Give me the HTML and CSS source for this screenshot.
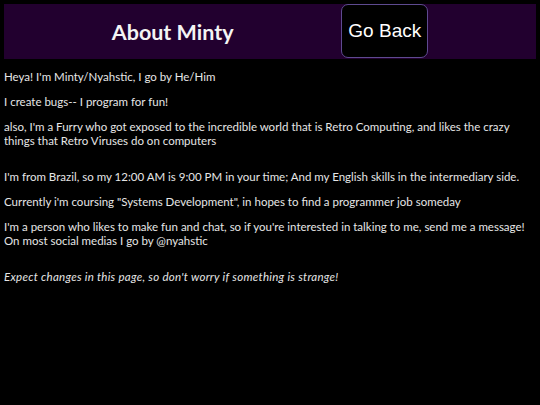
FILE: index.html
```html
<!DOCTYPE html>
<html lang="en">
<head>
<meta charset="utf-8">
<title>About Minty</title>
<link rel="stylesheet" href="styles.css">
</head>
<body>
<header class="topbar">
  <h1 class="title">About Minty</h1>
  <a class="back-btn" href="#">Go Back</a>
</header>
<main class="content">
  <p>Heya! I'm Minty/Nyahstic, I go by He/Him</p>
  <p>I create bugs-- I program for fun!</p>
  <p>also, I'm a Furry who got exposed to the incredible world that is Retro Computing, and likes the crazy things that Retro Viruses do on computers</p>
  <p class="gap">I'm from Brazil, so my 12:00 AM is 9:00 PM in your time; And my English skills in the intermediary side.</p>
  <p>Currently i'm coursing "Systems Development", in hopes to find a programmer job someday</p>
  <p>I'm a person who likes to make fun and chat, so if you're interested in talking to me, send me a message!<br>On most social medias I go by @nyahstic</p>
  <p class="gap note">Expect changes in this page, so don't worry if something is strange!</p>
</main>
</body>
</html>
```

FILE: styles.css
```css
html, body {
  background: #000;
}
body {
  margin: 4px;
  color: #e6e6e6;
  font-family: "Lato", "Noto Sans", sans-serif;
  font-size: 11.5px;
  line-height: 14px;
}
.topbar {
  display: flex;
  justify-content: space-evenly;
  align-items: center;
  height: 55px;
  background: #22002f;
}
.title {
  margin: 0;
  padding-top: 3px;
  font-size: 21.5px;
  font-weight: 700;
  color: #f4f4f4;
  line-height: 1;
}
.back-btn {
  align-self: flex-start;
  box-sizing: border-box;
  height: 54px;
  padding: 0 6px;
  display: flex;
  align-items: center;
  background: #000;
  border: 1px solid #5e4a90;
  border-radius: 7px;
  color: #fff;
  text-decoration: none;
  font-family: "Liberation Sans", Arial, sans-serif;
  font-size: 19px;
}
.content p {
  margin: 11px 0;
}
.content .gap {
  margin-top: 22px;
}
.note {
  font-style: italic;
  letter-spacing: 0.28px;
}
```
